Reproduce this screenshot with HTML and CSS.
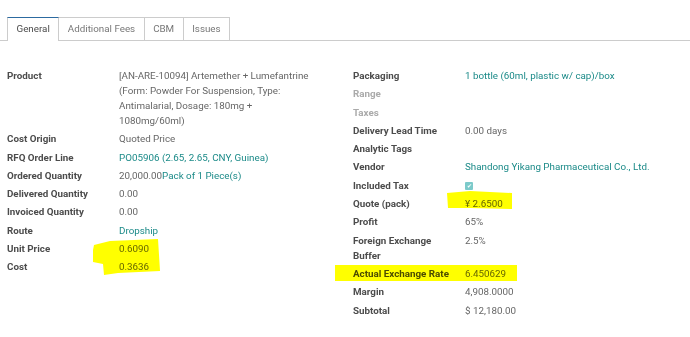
FILE: index.html
```html
<!DOCTYPE html>
<html lang="en">
<head>
  <title>Purchase Line</title>
  <link rel="stylesheet" href="styles.css">
</head>
<body>

<!-- Notebook tabs -->
<ul class="tabs">
  <li class="tab active">General</li>
  <li class="tab">Additional Fees</li>
  <li class="tab">CBM</li>
  <li class="tab">Issues</li>
</ul>

<div class="sheet">
  <!-- Left group -->
  <div class="group group-left">
    <div class="label">Product</div>
    <div class="value">[AN-ARE-10094] Artemether + Lumefantrine (Form: Powder For Suspension, Type: Antimalarial, Dosage: 180mg + 1080mg/60ml)</div>
    <div class="label">Cost Origin</div>
    <div class="value">Quoted Price</div>
    <div class="label">RFQ Order Line</div>
    <div class="value link">PO05906 (2.65, 2.65, CNY, Guinea)</div>
    <div class="label">Ordered Quantity</div>
    <div class="value">20,000.00<span class="link">Pack of 1 Piece(s)</span></div>
    <div class="label">Delivered Quantity</div>
    <div class="value">0.00</div>
    <div class="label">Invoiced Quantity</div>
    <div class="value">0.00</div>
    <div class="label">Route</div>
    <div class="value link">Dropship</div>
    <div class="label">Unit Price</div>
    <div class="value">0.6090</div>
    <div class="label">Cost</div>
    <div class="value">0.3636</div>
  </div>

  <!-- Right group -->
  <div class="group group-right">
    <div class="label">Packaging</div>
    <div class="value link">1 bottle (60ml, plastic w/ cap)/box</div>
    <div class="label muted">Range</div>
    <div class="value"></div>
    <div class="label muted">Taxes</div>
    <div class="value"></div>
    <div class="label">Delivery Lead Time</div>
    <div class="value">0.00 days</div>
    <div class="label">Analytic Tags</div>
    <div class="value"></div>
    <div class="label">Vendor</div>
    <div class="value link">Shandong Yikang Pharmaceutical Co., Ltd.</div>
    <div class="label">Included Tax</div>
    <div class="value"><span class="checkbox">&#10004;</span></div>
    <div class="label">Quote (pack)</div>
    <div class="value">¥ 2.6500</div>
    <div class="label">Profit</div>
    <div class="value">65%</div>
    <div class="label">Foreign Exchange Buffer</div>
    <div class="value">2.5%</div>
    <div class="label">Actual Exchange Rate</div>
    <div class="value">6.450629</div>
    <div class="label">Margin</div>
    <div class="value">4,908.0000</div>
    <div class="label">Subtotal</div>
    <div class="value">$ 12,180.00</div>
  </div>
</div>

<!-- Highlighter marks drawn over the form -->
<svg class="marker" width="690" height="337" viewBox="0 0 690 337">
  <polygon points="94,245 110,241 158,239 159,255 160,271 118,273 104,275 103,264 93,262 93,250" />
  <polygon points="447,193 470,191 512,193 512,209 470,208 448,208" />
  <polygon points="335,265 517,265 517,281 335,281" />
</svg>

</body>
</html>
```

FILE: styles.css
```css
body {
  margin: 0;
  width: 690px;
  height: 337px;
  background: #fff;
  font-family: Roboto, "Noto Sans", sans-serif;
  font-size: 9.8px;
  color: #666;
  overflow: hidden;
  position: relative;
}
.tabs {
  list-style: none;
  margin: 17px 0 0 0;
  padding: 0 0 0 7px;
  display: flex;
  border-bottom: 1px solid #ccc;
  height: 23px;
}
.tab {
  height: 23px;
  box-sizing: border-box;
  padding: 0 8.5px;
  line-height: 22px;
  border: 1px solid #ccc;
  border-left: none;
  border-bottom: none;
  color: #777;
  font-size: 9.8px;
}
.tab:first-child {
  border-left: 1px solid #ccc;
}
.tab.active {
  color: #4c4c4c;
  background: #fff;
  height: 24px;
  border-top: 1px solid #2c6aa0;
}
.sheet {
  display: flex;
  padding: 27px 0 0 7px;
}
.group {
  display: grid;
  grid-template-columns: 112px 1fr;
  row-gap: 3.3px;
  line-height: 15px;
  align-content: start;
}
.group-left {
  width: 306px;
  grid-template-columns: 112px 200px;
}
.group-right {
  margin-left: 40px;
  width: 330px;
}
.label {
  font-weight: bold;
  color: #4c4c4c;
  padding-right: 6px;
}
.label.muted {
  color: #aaa;
}
.value {
  color: #666;
}
.link {
  color: #1b8a88;
}
.checkbox {
  display: inline-block;
  width: 8px;
  height: 8px;
  background: #7ccaca;
  color: #fff;
  font-size: 6px;
  line-height: 8px;
  text-align: center;
  vertical-align: middle;
  border-radius: 1px;
}
.marker {
  position: absolute;
  left: 0;
  top: 0;
  pointer-events: none;
  mix-blend-mode: multiply;
}
.marker polygon {
  fill: #ffff00;
}
```
